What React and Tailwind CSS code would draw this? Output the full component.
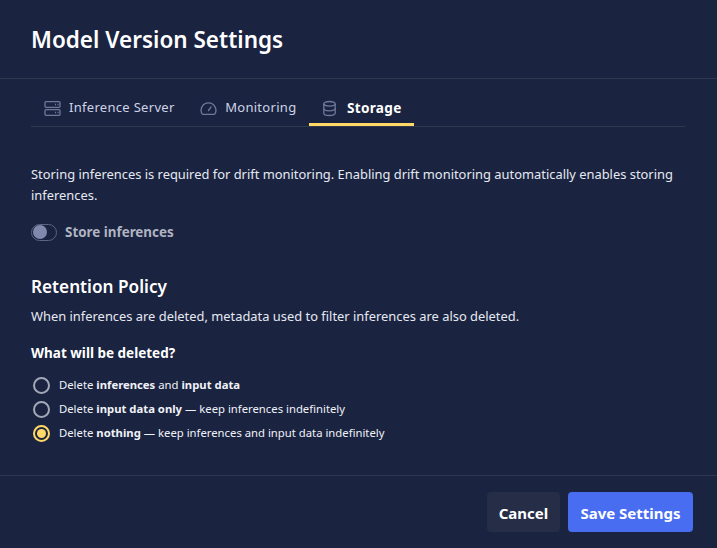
function ServerIcon() {
    return (
        <svg width="17" height="17" viewBox="0 0 17 17" fill="none" stroke="#6e7a9c" strokeWidth="1.3">
            <rect x="1" y="1.7" width="15" height="5.6" rx="1" />
            <rect x="1" y="9.7" width="15" height="5.6" rx="1" />
            <path d="M11 4.5h1M13.5 4.5h1M11 12.5h1M13.5 12.5h1" />
        </svg>
    )
}

function GaugeIcon() {
    return (
        <svg width="17" height="17" viewBox="0 0 17 17" fill="none" stroke="#6e7a9c" strokeWidth="1.3">
            <path d="M3 14.3h11a1.3 1.3 0 0 0 1.2-.9A7.4 7.4 0 1 0 1.8 13.4a1.3 1.3 0 0 0 1.2.9z" />
            <path d="M8.5 10.5l2.6-3.6" strokeLinecap="round" />
        </svg>
    )
}

function DatabaseIcon() {
    return (
        <svg width="17" height="17" viewBox="0 0 17 17" fill="none" stroke="#6e7a9c" strokeWidth="1.3">
            <ellipse cx="8.5" cy="3.8" rx="5.7" ry="2.3" />
            <path d="M2.8 3.8v9.4c0 1.3 2.6 2.3 5.7 2.3s5.7-1 5.7-2.3V3.8" />
            <path d="M2.8 8.5c0 1.3 2.6 2.3 5.7 2.3s5.7-1 5.7-2.3" />
        </svg>
    )
}

function Tab({ icon: Icon, label, active }) {
    return (
        <div className={`flex items-center gap-[8.5px] h-[47px] pt-[14px] px-[12.5px] border-b-[3px] -mb-px ${active ? 'border-[#ffd866] font-bold text-white' : 'border-transparent text-[#ced4e6]'}`}>
            <Icon />
            <span className={`tracking-[0.3px] ${active ? 'text-[13.6px]' : 'text-[13px]'}`}>{label}</span>
        </div>
    )
}

function Radio({ checked, children }) {
    return (
        <label className="flex items-center gap-[9px] h-[24px] ml-[2px] text-[11.3px] text-[#f0f2f8]">
            <span className={`w-[17px] h-[17px] rounded-full border-2 flex items-center justify-center ${checked ? 'border-[#ffd866]' : 'border-[#a3a8b8]'}`}>
                {checked && <span className="w-[9px] h-[9px] rounded-full bg-[#ffd866]" />}
            </span>
            <span>{children}</span>
        </label>
    )
}

export default function App() {
    return (
        <div className="w-[717px] h-[548px] bg-[#1a2340] text-white flex flex-col font-['Noto_Sans',sans-serif] overflow-hidden">
            <header className="h-[79px] px-[31px] pt-[2px] flex items-center border-b border-[#2f384f]">
                <h1 className="text-[22.5px] font-semibold">Model Version Settings</h1>
            </header>

            <div className="flex-1 px-[31px]">
                <div className="flex border-b border-[#2f384f] h-[48px] w-[654px]">
                    <Tab icon={ServerIcon} label="Inference Server" />
                    <Tab icon={GaugeIcon} label="Monitoring" />
                    <Tab icon={DatabaseIcon} label="Storage" active />
                </div>

                <p className="mt-[37px] text-[12.9px] leading-[21px] text-[#e6e9f2]">
                    Storing inferences is required for drift monitoring. Enabling drift monitoring automatically enables storing inferences.
                </p>

                <div className="mt-[16px] flex items-center gap-[8px] h-[20px]">
                    <span className="w-[26px] h-[17px] rounded-full border border-[#5c6582] flex items-center">
                        <span className="w-[14px] h-[14px] ml-px rounded-full bg-[#8089ad]" />
                    </span>
                    <span className="text-[13.4px] font-bold text-[#b0b4c0]">Store inferences</span>
                </div>

                <h2 className="mt-[33px] text-[17.2px] font-semibold leading-[24px]">Retention Policy</h2>
                <p className="mt-[7px] text-[12.9px] leading-[20px] text-[#e6e9f2]">
                    When inferences are deleted, metadata used to filter inferences are also deleted.
                </p>

                <h3 className="mt-[17px] text-[13.5px] font-bold leading-[20px]">What will be deleted?</h3>

                <div className="mt-[10px] flex flex-col">
                    <Radio>Delete <b>inferences</b> and <b>input data</b></Radio>
                    <Radio>Delete <b>input data only</b> — keep inferences indefinitely</Radio>
                    <Radio checked>Delete <b>nothing</b> — keep inferences and input data indefinitely</Radio>
                </div>
            </div>

            <footer className="h-[73px] px-[24px] flex items-start justify-end gap-[8px] border-t border-[#2f384f] pt-[16px]">
                <button className="h-[40px] w-[73px] rounded-[4px] bg-[#252d47] text-[15px] font-bold pt-[2px]">Cancel</button>
                <button className="h-[40px] w-[125px] rounded-[4px] bg-[#486df0] text-[15px] font-bold pt-[2px]">Save Settings</button>
            </footer>
        </div>
    )
}
